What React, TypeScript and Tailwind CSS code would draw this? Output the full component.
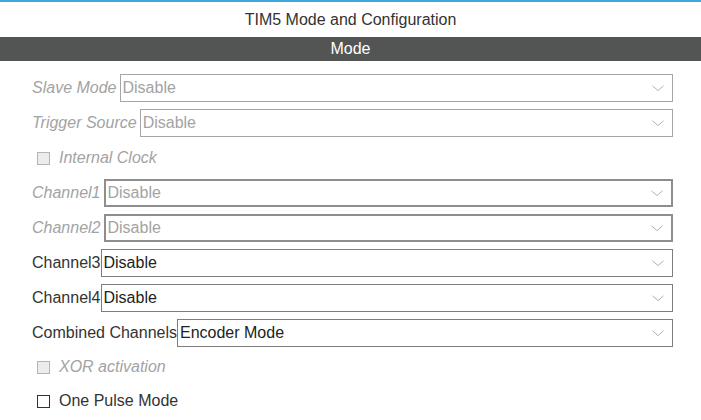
import React from 'react';

type Row =
  | { kind: 'select'; label: string; value: string; disabled?: boolean; thick?: boolean }
  | { kind: 'check'; label: string; disabled?: boolean; compact?: boolean };

const rows: Row[] = [
  { kind: 'select', label: 'Slave Mode', value: 'Disable', disabled: true },
  { kind: 'select', label: 'Trigger Source', value: 'Disable', disabled: true },
  { kind: 'check', label: 'Internal Clock', disabled: true },
  { kind: 'select', label: 'Channel1', value: 'Disable', disabled: true, thick: true },
  { kind: 'select', label: 'Channel2', value: 'Disable', disabled: true, thick: true },
  { kind: 'select', label: 'Channel3', value: 'Disable' },
  { kind: 'select', label: 'Channel4', value: 'Disable' },
  { kind: 'select', label: 'Combined Channels', value: 'Encoder Mode' },
  { kind: 'check', label: 'XOR activation', disabled: true, compact: true },
  { kind: 'check', label: 'One Pulse Mode' },
];

const Chevron = () => (
  <svg width="12" height="7" viewBox="0 0 12 7" className="shrink-0">
    <path d="M0.5 0.8 L6 5.6 L11.5 0.8" fill="none" stroke="#b0b0b0" strokeWidth="1" />
  </svg>
);

const SelectRow = ({ row }: { row: Extract<Row, { kind: 'select' }> }) => (
  <div className="flex items-center h-[28px] mb-[7px]">
    <span className={row.disabled ? 'italic text-[#a3a3a3] mr-[3px]' : 'text-[#333]'}>
      {row.label}
    </span>
    <div
      className={`flex-1 h-full flex items-center justify-between pl-[2px] pr-[8px] bg-white ${
        row.thick ? 'border-2 border-[#8e8e8e]' : row.disabled ? 'border border-[#a6a6a6]' : 'border border-[#7d7d7d]'
      }`}
    >
      <span className={row.disabled ? 'text-[#a3a3a3]' : 'text-[#222]'}>{row.value}</span>
      <Chevron />
    </div>
  </div>
);

const CheckRow = ({ row }: { row: Extract<Row, { kind: 'check' }> }) => (
  <div className={`flex items-center mb-[7px] pl-[5px] ${row.compact ? 'h-[26px]' : 'h-[28px]'}`}>
    <span
      className={`w-[13px] h-[13px] mr-[9px] border ${
        row.disabled ? 'border-[#b4b4b4] bg-[#ececec]' : 'border-[#333] bg-white'
      }`}
    />
    <span className={row.disabled ? 'italic text-[#a3a3a3]' : 'text-[#333]'}>{row.label}</span>
  </div>
);

export default function App() {
  return (
    <div
      className="w-[701px] h-[420px] bg-white overflow-hidden text-[16px] leading-none"
      style={{ fontFamily: '"Liberation Sans", Arial, sans-serif' }}
    >
      <div className="h-[2px] bg-[#3da7de]" />
      <div className="h-[35px] flex items-center justify-center text-[#333]">TIM5 Mode and Configuration</div>
      <div className="h-[24px] bg-[#535554] flex items-center justify-center text-white">Mode</div>
      <div className="pt-[13px] pl-[32px] pr-[28px]">
        {rows.map((r, i) =>
          r.kind === 'select' ? <SelectRow key={i} row={r} /> : <CheckRow key={i} row={r} />
        )}
      </div>
    </div>
  );
}
